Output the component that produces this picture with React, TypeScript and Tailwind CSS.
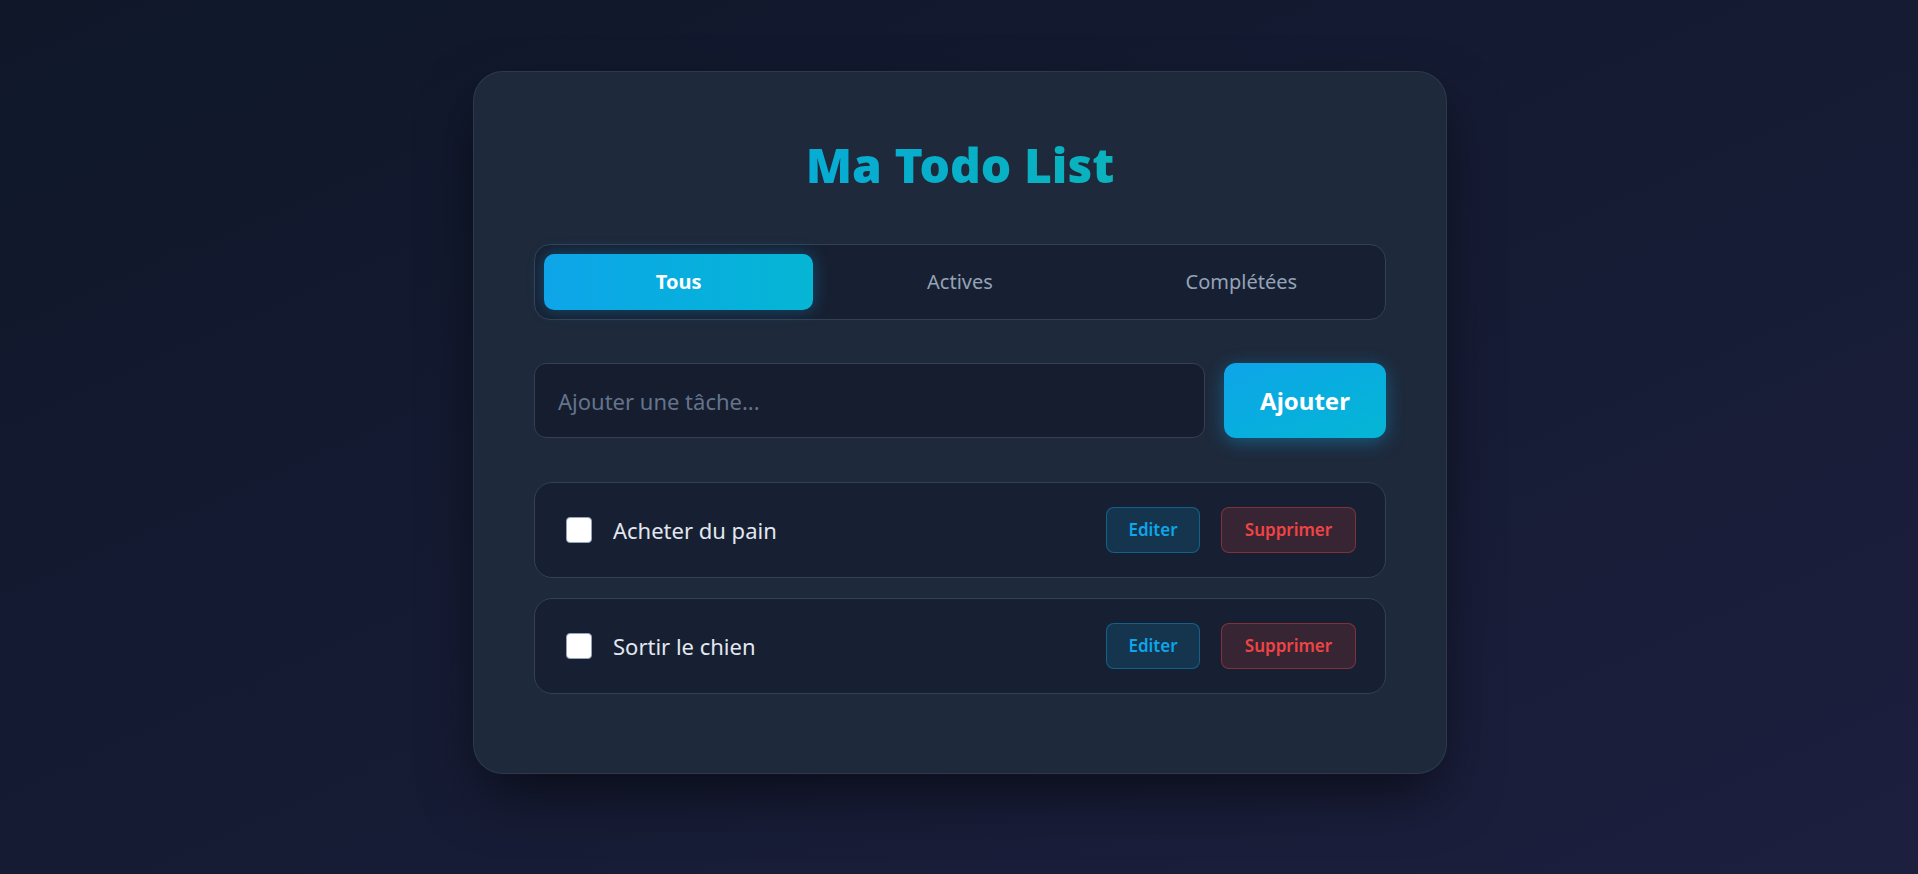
import { useState } from "react";

type Todo = { id: number; text: string; done: boolean };

const filters = ["Tous", "Actives", "Complétées"];

export default function App() {
  const [filter, setFilter] = useState("Tous");
  const [todos] = useState<Todo[]>([
    { id: 1, text: "Acheter du pain", done: false },
    { id: 2, text: "Sortir le chien", done: false },
  ]);

  return (
    <div
      className="min-h-screen w-full flex justify-center pt-[71px] bg-gradient-to-br from-[#0f1729] to-[#1c1f3e]"
      style={{ fontFamily: '"Noto Sans", "Open Sans", sans-serif' }}
    >
      <div className="w-[974px] h-fit ml-[2px] rounded-[30px] border border-[#334155]/70 bg-[#1e293b] px-[60px] pt-[60px] pb-[79px] shadow-[0_25px_60px_-10px_rgba(0,0,0,0.6)]">
        {/* Title */}
        <h1 className="mt-[9px] mb-[55px] text-center text-[48px] leading-none font-black bg-gradient-to-r from-[#0ea5e9] to-[#14b8a6] bg-clip-text text-transparent">
          Ma Todo List
        </h1>

        {/* Filters */}
        <div className="flex gap-3 p-[9px] rounded-[16px] border border-[#334155] bg-[#172032]">
          {filters.map((f) => (
            <button
              key={f}
              onClick={() => setFilter(f)}
              className={
                f === filter
                  ? "flex-1 h-[56px] rounded-[10px] bg-gradient-to-r from-[#0ea5e9] to-[#06b6d4] text-white text-[20px] font-bold shadow-[0_0_16px_rgba(14,165,233,0.35)]"
                  : "flex-1 h-[56px] rounded-[10px] text-[#94a3b8] text-[20px]"
              }
            >
              {f}
            </button>
          ))}
        </div>

        {/* Add row */}
        <div className="mt-[43px] flex gap-[19px]">
          <input
            placeholder="Ajouter une tâche..."
            className="flex-1 h-[75px] rounded-[12px] border border-[#334155] bg-[#151d2f] pl-[23px] text-[22px] text-[#e2e8f0] placeholder:text-[#64748b] outline-none"
          />
          <button className="w-[162px] h-[75px] rounded-[12px] bg-gradient-to-br from-[#0ea5e9] to-[#06b6d4] text-white text-[24px] font-bold shadow-[0_4px_18px_rgba(14,165,233,0.4)]">
            Ajouter
          </button>
        </div>

        {/* Todos */}
        <div className="mt-[44px] flex flex-col gap-5">
          {todos.map((t) => (
            <div
              key={t.id}
              className="h-[96px] flex items-center gap-[21px] px-[31px] rounded-[18px] border border-[#334155] bg-[#172032]"
            >
              <span className="w-[26px] h-[26px] rounded-[4px] bg-white border border-[#94a3b8]" />
              <span className="flex-1 text-[22px] text-[#e2e8f0]">{t.text}</span>
              <button className="w-[94px] h-[46px] rounded-[8px] border border-[#0ea5e9]/40 bg-[#0ea5e9]/15 text-[#0ea5e9] text-[17px] font-semibold">
                Editer
              </button>
              <button className="w-[135px] h-[46px] mr-[-2px] rounded-[8px] border border-[#ef4444]/40 bg-[#ef4444]/15 text-[#ef4444] text-[17px] font-semibold">
                Supprimer
              </button>
            </div>
          ))}
        </div>
      </div>
    </div>
  );
}
